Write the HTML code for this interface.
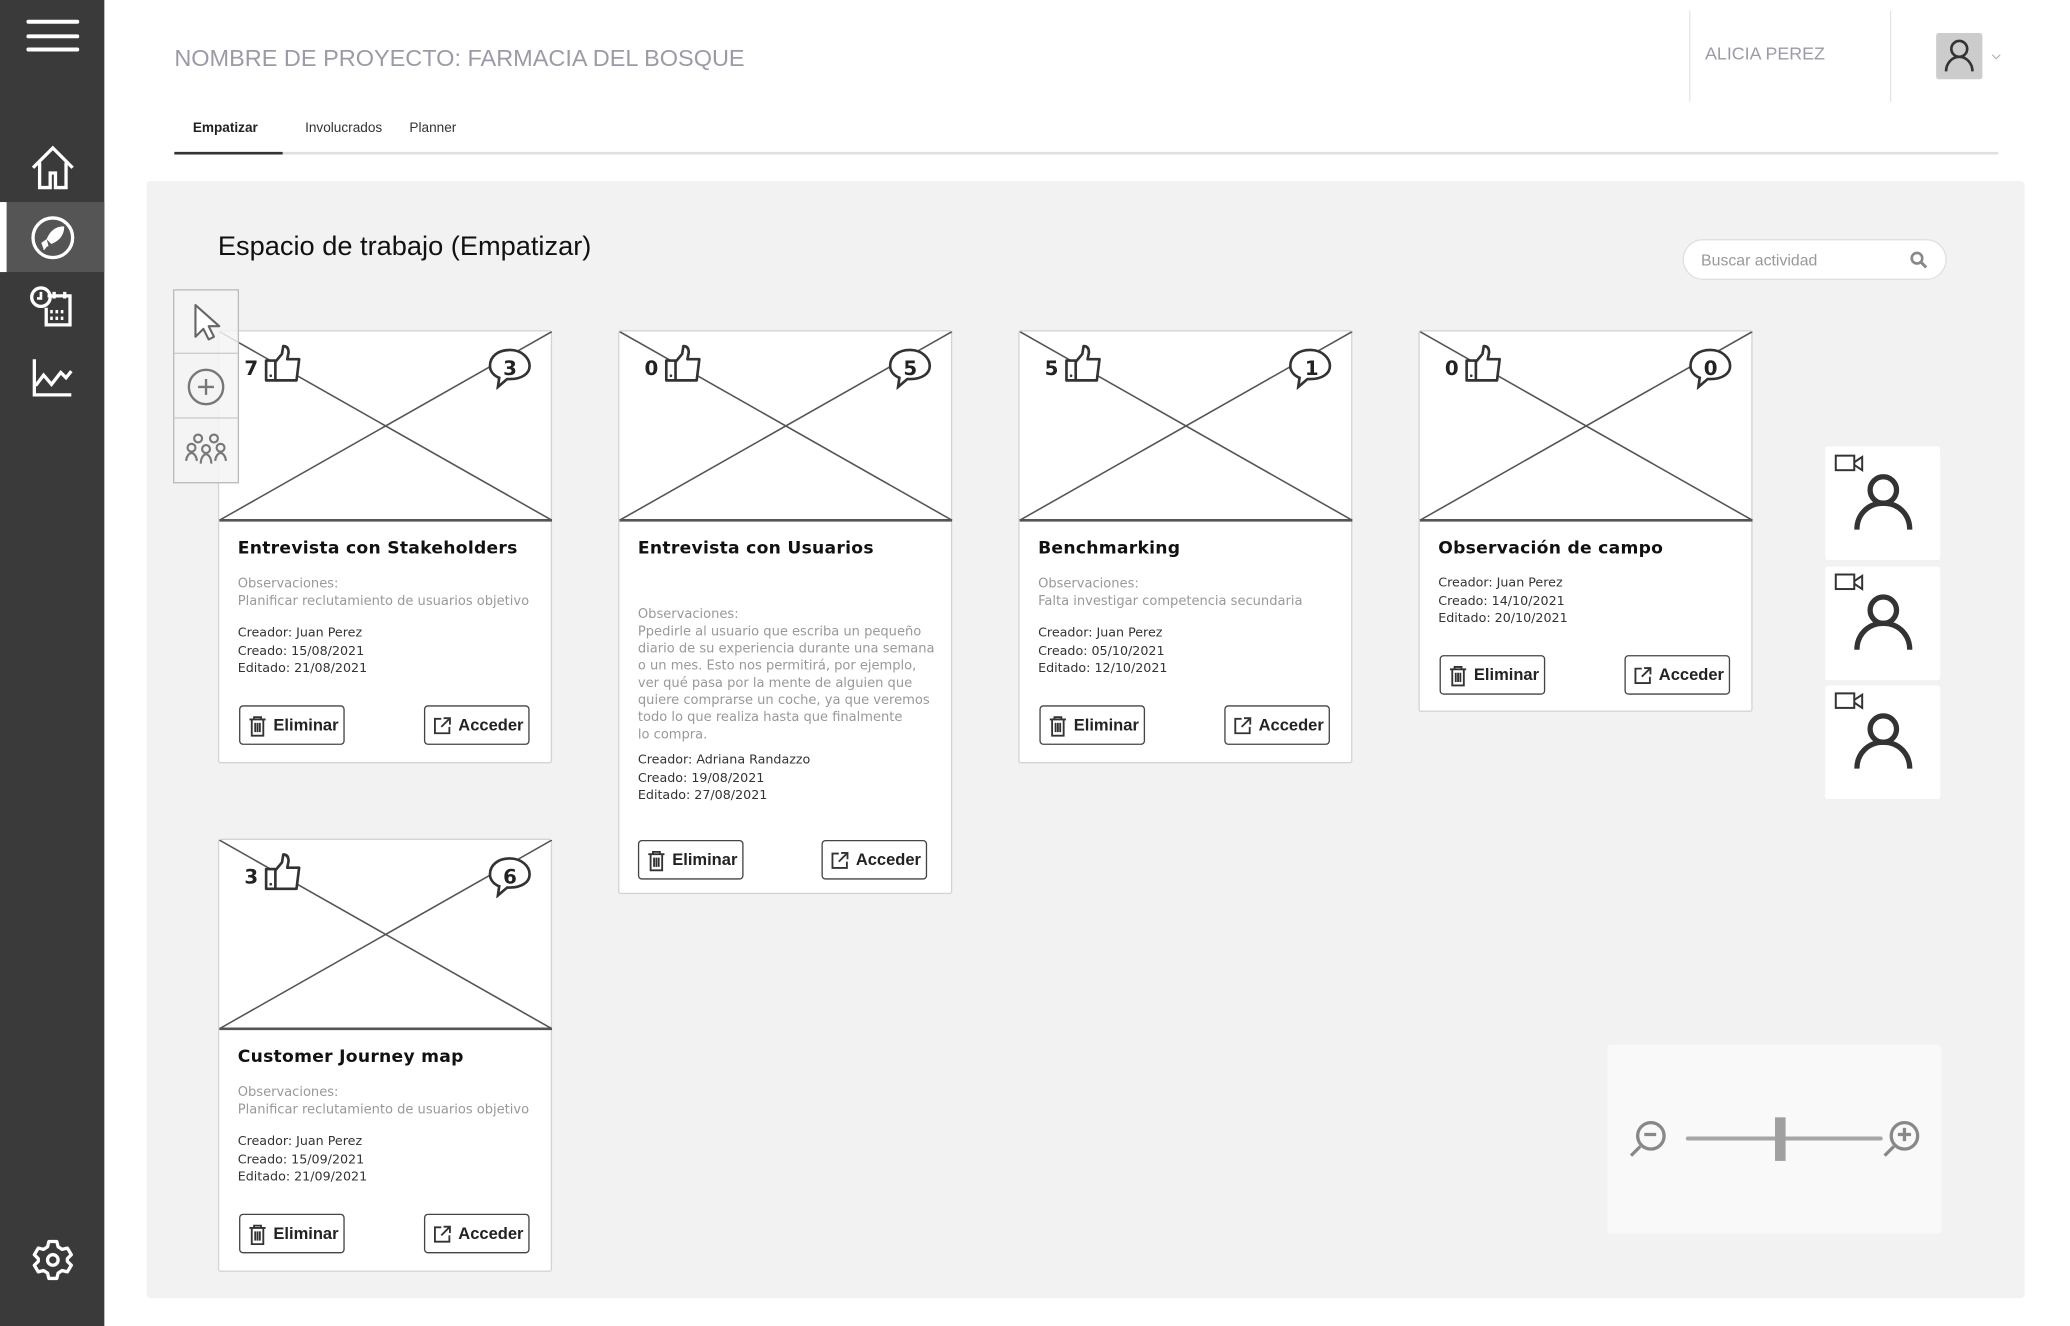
<!DOCTYPE html>
<html><head><meta charset="utf-8"><style>
html,body{margin:0;padding:0;width:2070px;height:1326px;overflow:hidden;background:#fff}
#w{position:absolute;left:0;top:0;width:1568px;height:1004px;transform:scale(1.3207,1.32072);transform-origin:0 0;font-family:"Liberation Sans",sans-serif}
.a{position:absolute}
.side{left:0;top:0;width:79px;height:1004px;background:#3a3a3a}
.card{position:absolute;width:251px;background:#fff;border:1px solid #d4d4d4;border-radius:2px;font-family:"DejaVu Sans","Liberation Sans",sans-serif}
.card svg.x{position:absolute;left:0;top:0}
.ttl{position:absolute;left:14px;font-size:13px;font-weight:bold;color:#111;font-family:"DejaVu Sans",sans-serif;letter-spacing:.2px}
.obs{position:absolute;left:14px;font-size:9.9px;line-height:13px;color:#999;white-space:nowrap}
.meta{position:absolute;left:14px;font-size:9.6px;line-height:13.5px;color:#333;white-space:nowrap}
.btn{position:absolute;width:80px;height:30px;border:1px solid #444;border-radius:3px;box-sizing:border-box;font-family:"Liberation Sans",sans-serif;font-weight:bold;font-size:12.5px;color:#222;line-height:28px}
.btn svg{position:absolute;left:6px;top:7px}
.btn span{position:absolute;left:25px}
.num{position:absolute;font-size:15px;font-weight:bold;color:#222}
.tile{position:absolute;left:1382px;width:87px;height:86px;background:#fff;border-radius:2px}
</style></head><body><div id="w">
<svg width="0" height="0" style="position:absolute"><defs>
<symbol id="thumb" viewBox="0 0 30 30"><path d="M2 13h7v15H2z M9 14l5-6 1-6c3 0 4 2 4 5l-1 5h9l-2 16H9" fill="#fff" stroke="#333" stroke-width="2" stroke-linejoin="round"/><circle cx="5.5" cy="24.5" r="1" fill="#333"/></symbol>
<symbol id="bub" viewBox="0 0 34 32"><path d="M17 2C8 2 2 7 2 14c0 5 4 8 7 9l-1 7 7-6h2c9 0 15-4 15-10S26 2 17 2z" fill="#fff" stroke="#333" stroke-width="2"/></symbol>
<symbol id="trash" viewBox="0 0 16 18"><path d="M1 3h14M5 3V1h6v2M3 3v14h10V3M6 6v8M8 6v8M10 6v8" fill="none" stroke="#333" stroke-width="1.6"/></symbol>
<symbol id="ext" viewBox="0 0 16 16"><path d="M7 2H1.5v12.5H14V9M9 1.5h5.5V7M14.5 1.5L7 9" fill="none" stroke="#333" stroke-width="1.6"/></symbol>
<symbol id="person" viewBox="0 0 50 50"><circle cx="25" cy="16" r="10" fill="none" stroke="#333" stroke-width="4"/><path d="M5 46c0-11 8-20 20-20s20 9 20 20" fill="none" stroke="#333" stroke-width="4"/></symbol>
<symbol id="cam" viewBox="0 0 22 14"><rect x="1" y="1" width="14" height="11" fill="none" stroke="#333" stroke-width="1.5"/><path d="M15 6l6-4v10l-6-4" fill="none" stroke="#333" stroke-width="1.5"/></symbol>
</defs></svg>

<div class="a side"></div>
<div class="a" style="left:20px;top:15px;width:40px;height:3px;background:#fff;border-radius:2px"></div>
<div class="a" style="left:20px;top:26px;width:40px;height:3px;background:#fff;border-radius:2px"></div>
<div class="a" style="left:20px;top:36px;width:40px;height:3px;background:#fff;border-radius:2px"></div>
<svg class="a" style="left:22px;top:109px" width="36" height="36" viewBox="0 0 36 36"><path d="M3 18L18 3l15 15M8 14v19h8v-11h4v11h8V14" fill="none" stroke="#fff" stroke-width="2.5"/></svg>
<div class="a" style="left:0;top:153px;width:79px;height:53px;background:#555"></div>
<div class="a" style="left:0;top:153px;width:5px;height:53px;background:#fff"></div>
<svg class="a" style="left:23px;top:163px" width="34" height="34" viewBox="0 0 34 34"><circle cx="17" cy="17" r="15" fill="none" stroke="#fff" stroke-width="2.5"/><path d="M25 9c-6 0-10 4-12 9l3 3c5-2 9-6 9-12zM12 19l-3 2 1 3 3-1zM13 22l-3 4" fill="#fff" stroke="#fff" stroke-width="1.2"/></svg>
<svg class="a" style="left:22px;top:216px" width="34" height="32" viewBox="0 0 34 32"><circle cx="9" cy="9" r="7" fill="none" stroke="#fff" stroke-width="2.5"/><path d="M9 5v5H6" stroke="#fff" stroke-width="2" fill="none"/><path d="M14 8h17v22H13V17M19 5v5M27 5v5M16 20h2M20 20h2M24 20h2M16 25h2M20 25h2M24 25h2" stroke="#fff" stroke-width="2.5" fill="none"/></svg>
<svg class="a" style="left:24px;top:271px" width="32" height="30" viewBox="0 0 32 30"><path d="M2 1v27h28M3 21l6-8 6 7 7-9 4 4 4-5" fill="none" stroke="#fff" stroke-width="2.5"/></svg>
<svg class="a" style="left:24px;top:938px" width="32" height="32" viewBox="0 0 32 32"><path d="M13 2h6l1 4 3 2 4-1 3 5-3 3v2l3 3-3 5-4-1-3 2-1 4h-6l-1-4-3-2-4 1-3-5 3-3v-2L2 12l3-5 4 1 3-2z" fill="none" stroke="#fff" stroke-width="2.5" stroke-linejoin="round"/><circle cx="16" cy="16" r="4" fill="none" stroke="#fff" stroke-width="2.5"/></svg>

<div class="a" style="left:132px;top:34px;font-size:17.8px;color:#9b9ba8;white-space:nowrap">NOMBRE DE PROYECTO: FARMACIA DEL BOSQUE</div>
<div class="a" style="left:1279px;top:8px;width:1px;height:69px;background:#e4e4e4"></div>
<div class="a" style="left:1431px;top:8px;width:1px;height:69px;background:#e4e4e4"></div>
<div class="a" style="left:1291px;top:33px;font-size:13.5px;color:#9b9ba8">ALICIA PEREZ</div>
<div class="a" style="left:1466px;top:25px;width:35px;height:35px;background:#ccc;border-radius:2px"></div>
<svg class="a" style="left:1471px;top:28px" width="25" height="29" viewBox="0 0 50 58"><circle cx="25" cy="18" r="12" fill="none" stroke="#333" stroke-width="4"/><path d="M5 52c0-12 9-22 20-22s20 10 20 22" fill="none" stroke="#333" stroke-width="4"/></svg>
<svg class="a" style="left:1508px;top:41px" width="7" height="5"><path d="M0.5 0.5l3 3 3-3" fill="none" stroke="#aaa" stroke-width="0.8"/></svg>

<div class="a" style="left:146px;top:92px;font-size:10.3px;font-weight:bold;color:#222">Empatizar</div>
<div class="a" style="left:231px;top:92px;font-size:10.3px;color:#333">Involucrados</div>
<div class="a" style="left:310px;top:92px;font-size:10.3px;color:#333">Planner</div>
<div class="a" style="left:132px;top:115px;width:1381px;height:2px;background:#e0e0e0"></div>
<div class="a" style="left:132px;top:115px;width:82px;height:2px;background:#333"></div>

<div class="a" style="left:111px;top:137px;width:1422px;height:846px;background:#f2f2f2;border-radius:3px"></div>
<div class="a" style="left:165px;top:175px;font-size:20.6px;color:#111">Espacio de trabajo (Empatizar)</div>
<div class="a" style="left:1274px;top:181px;width:200px;height:31px;background:#fff;border:1px solid #e0e0e0;border-radius:16px;box-sizing:border-box"></div>
<div class="a" style="left:1288px;top:190px;font-size:12px;color:#999">Buscar actividad</div>
<svg class="a" style="left:1446px;top:190px" width="14" height="14" viewBox="0 0 14 14"><circle cx="5.5" cy="5.5" r="4" fill="none" stroke="#888" stroke-width="2"/><path d="M8.5 8.5l4 4" stroke="#888" stroke-width="2.2"/></svg>

<!-- cards -->
<div class="card" style="left:165px;top:250px;height:326px">
<svg class="x" width="252" height="145"><line x1="0" y1="0" x2="252" y2="143" stroke="#555" stroke-width="1.2"/><line x1="252" y1="0" x2="0" y2="143" stroke="#555" stroke-width="1.2"/><line x1="0" y1="143" x2="252" y2="143" stroke="#555" stroke-width="2"/></svg>
<div class="num" style="left:19px;top:19px">7</div><svg class="a" style="left:33px;top:9px" width="31" height="30"><use href="#thumb"/></svg>
<svg class="a" style="left:203px;top:12px" width="34" height="32"><use href="#bub"/></svg><div class="num" style="left:215px;top:19px">3</div>
<div class="ttl" style="top:157px">Entrevista con Stakeholders</div>
<div class="obs" style="top:185px">Observaciones:<br>Planificar reclutamiento de usuarios objetivo</div>
<div class="meta" style="top:222px">Creador: Juan Perez<br>Creado: 15/08/2021<br>Editado: 21/08/2021</div>
<div class="btn" style="left:15px;top:283px"><svg width="14" height="16"><use href="#trash"/></svg><span>Eliminar</span></div>
<div class="btn" style="left:155px;top:283px"><svg width="14" height="15"><use href="#ext"/></svg><span>Acceder</span></div>
</div>

<div class="card" style="left:468px;top:250px;height:425px">
<svg class="x" width="252" height="145"><line x1="0" y1="0" x2="252" y2="143" stroke="#555" stroke-width="1.2"/><line x1="252" y1="0" x2="0" y2="143" stroke="#555" stroke-width="1.2"/><line x1="0" y1="143" x2="252" y2="143" stroke="#555" stroke-width="2"/></svg>
<div class="num" style="left:19px;top:19px">0</div><svg class="a" style="left:33px;top:9px" width="31" height="30"><use href="#thumb"/></svg>
<svg class="a" style="left:203px;top:12px" width="34" height="32"><use href="#bub"/></svg><div class="num" style="left:215px;top:19px">5</div>
<div class="ttl" style="top:157px">Entrevista con Usuarios</div>
<div class="obs" style="top:208px">Observaciones:<br>Ppedirle al usuario que escriba un pequeño<br>diario de su experiencia durante una semana<br>o un mes. Esto nos permitirá, por ejemplo,<br>ver qué pasa por la mente de alguien que<br>quiere comprarse un coche, ya que veremos<br>todo lo que realiza hasta que finalmente<br>lo compra.</div>
<div class="meta" style="top:318px">Creador: Adriana Randazzo<br>Creado: 19/08/2021<br>Editado: 27/08/2021</div>
<div class="btn" style="left:14px;top:385px"><svg width="14" height="16"><use href="#trash"/></svg><span>Eliminar</span></div>
<div class="btn" style="left:153px;top:385px"><svg width="14" height="15"><use href="#ext"/></svg><span>Acceder</span></div>
</div>

<div class="card" style="left:771px;top:250px;height:326px">
<svg class="x" width="252" height="145"><line x1="0" y1="0" x2="252" y2="143" stroke="#555" stroke-width="1.2"/><line x1="252" y1="0" x2="0" y2="143" stroke="#555" stroke-width="1.2"/><line x1="0" y1="143" x2="252" y2="143" stroke="#555" stroke-width="2"/></svg>
<div class="num" style="left:19px;top:19px">5</div><svg class="a" style="left:33px;top:9px" width="31" height="30"><use href="#thumb"/></svg>
<svg class="a" style="left:203px;top:12px" width="34" height="32"><use href="#bub"/></svg><div class="num" style="left:216px;top:19px">1</div>
<div class="ttl" style="top:157px">Benchmarking</div>
<div class="obs" style="top:185px">Observaciones:<br>Falta investigar competencia secundaria</div>
<div class="meta" style="top:222px">Creador: Juan Perez<br>Creado: 05/10/2021<br>Editado: 12/10/2021</div>
<div class="btn" style="left:15px;top:283px"><svg width="14" height="16"><use href="#trash"/></svg><span>Eliminar</span></div>
<div class="btn" style="left:155px;top:283px"><svg width="14" height="15"><use href="#ext"/></svg><span>Acceder</span></div>
</div>

<div class="card" style="left:1074px;top:250px;height:287px">
<svg class="x" width="252" height="145"><line x1="0" y1="0" x2="252" y2="143" stroke="#555" stroke-width="1.2"/><line x1="252" y1="0" x2="0" y2="143" stroke="#555" stroke-width="1.2"/><line x1="0" y1="143" x2="252" y2="143" stroke="#555" stroke-width="2"/></svg>
<div class="num" style="left:19px;top:19px">0</div><svg class="a" style="left:33px;top:9px" width="31" height="30"><use href="#thumb"/></svg>
<svg class="a" style="left:203px;top:12px" width="34" height="32"><use href="#bub"/></svg><div class="num" style="left:215px;top:19px">0</div>
<div class="ttl" style="top:157px">Observación de campo</div>
<div class="meta" style="top:184px">Creador: Juan Perez<br>Creado: 14/10/2021<br>Editado: 20/10/2021</div>
<div class="btn" style="left:15px;top:245px"><svg width="14" height="16"><use href="#trash"/></svg><span>Eliminar</span></div>
<div class="btn" style="left:155px;top:245px"><svg width="14" height="15"><use href="#ext"/></svg><span>Acceder</span></div>
</div>

<div class="card" style="left:165px;top:635px;height:326px">
<svg class="x" width="252" height="145"><line x1="0" y1="0" x2="252" y2="143" stroke="#555" stroke-width="1.2"/><line x1="252" y1="0" x2="0" y2="143" stroke="#555" stroke-width="1.2"/><line x1="0" y1="143" x2="252" y2="143" stroke="#555" stroke-width="2"/></svg>
<div class="num" style="left:19px;top:19px">3</div><svg class="a" style="left:33px;top:9px" width="31" height="30"><use href="#thumb"/></svg>
<svg class="a" style="left:203px;top:12px" width="34" height="32"><use href="#bub"/></svg><div class="num" style="left:215px;top:19px">6</div>
<div class="ttl" style="top:157px">Customer Journey map</div>
<div class="obs" style="top:185px">Observaciones:<br>Planificar reclutamiento de usuarios objetivo</div>
<div class="meta" style="top:222px">Creador: Juan Perez<br>Creado: 15/09/2021<br>Editado: 21/09/2021</div>
<div class="btn" style="left:15px;top:283px"><svg width="14" height="16"><use href="#trash"/></svg><span>Eliminar</span></div>
<div class="btn" style="left:155px;top:283px"><svg width="14" height="15"><use href="#ext"/></svg><span>Acceder</span></div>
</div>

<!-- toolbar -->
<div class="a" style="left:131px;top:219px;width:48px;height:145px;background:rgba(245,245,245,.85);border:1px solid #bbb"></div>
<div class="a" style="left:132px;top:267px;width:48px;height:1px;background:#ccc"></div>
<div class="a" style="left:132px;top:316px;width:48px;height:1px;background:#ccc"></div>
<svg class="a" style="left:145px;top:229px" width="24" height="30" viewBox="0 0 24 30"><path d="M3 2v24l6-6 4 8 4-2-4-8h8z" fill="#fff" stroke="#666" stroke-width="1.6" stroke-linejoin="round"/></svg>
<svg class="a" style="left:141px;top:278px" width="30" height="30" viewBox="0 0 30 30"><circle cx="15" cy="15" r="13" fill="none" stroke="#777" stroke-width="1.8"/><path d="M15 9v12M9 15h12" stroke="#777" stroke-width="1.8"/></svg>
<svg class="a" style="left:140px;top:328px" width="32" height="24" viewBox="0 0 32 24"><g fill="none" stroke="#777" stroke-width="1.6"><circle cx="10" cy="4" r="3"/><circle cx="22" cy="4" r="3"/><circle cx="5" cy="11" r="3"/><circle cx="16" cy="12" r="3"/><circle cx="27" cy="11" r="3"/><path d="M1 21c0-3 2-6 4-6s4 3 4 6M12 23c0-4 2-7 4-7s4 3 4 7M23 21c0-3 2-6 4-6s4 3 4 6"/></g></svg>

<!-- tiles -->
<div class="tile" style="top:338px"></div><div class="tile" style="top:429px"></div><div class="tile" style="top:519px"></div>
<svg class="a" style="left:1389px;top:344px" width="22" height="14"><use href="#cam"/></svg>
<svg class="a" style="left:1389px;top:434px" width="22" height="14"><use href="#cam"/></svg>
<svg class="a" style="left:1389px;top:524px" width="22" height="14"><use href="#cam"/></svg>
<svg class="a" style="left:1401px;top:355px" width="50" height="50"><use href="#person"/></svg>
<svg class="a" style="left:1401px;top:446px" width="50" height="50"><use href="#person"/></svg>
<svg class="a" style="left:1401px;top:536px" width="50" height="50"><use href="#person"/></svg>

<!-- zoom widget -->
<div class="a" style="left:1217px;top:791px;width:253px;height:143px;background:#f9f9f9;border-radius:3px"></div>
<svg class="a" style="left:1230px;top:843px" width="240" height="40" viewBox="0 0 240 40"><g stroke="#888" stroke-width="2.5" fill="none"><circle cx="20" cy="17" r="10"/><path d="M12 25l-7 7M15 16h9"/><circle cx="212" cy="17" r="10"/><path d="M204 25l-7 7M207 16h10M212 11v10"/></g><path d="M48 19h146" stroke="#a6a6a6" stroke-width="3" stroke-linecap="round"/><rect x="114" y="3" width="8" height="33" fill="#a0a0a0"/></svg>
</div></body></html>
